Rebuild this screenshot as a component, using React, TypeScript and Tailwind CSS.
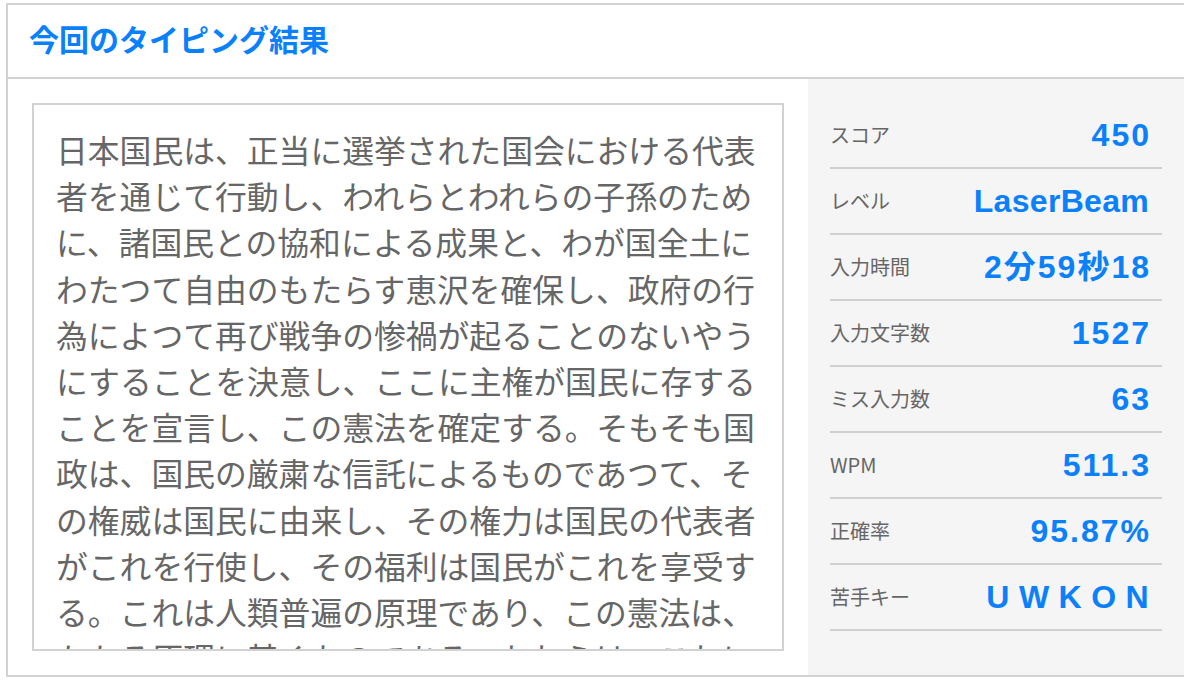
import React from "react";

const TEXT =
  "日本国民は、正当に選挙された国会における代表者を通じて行動し、われらとわれらの子孫のために、諸国民との協和による成果と、わが国全土にわたつて自由のもたらす恵沢を確保し、政府の行為によつて再び戦争の惨禍が起ることのないやうにすることを決意し、ここに主権が国民に存することを宣言し、この憲法を確定する。そもそも国政は、国民の厳粛な信託によるものであつて、その権威は国民に由来し、その権力は国民の代表者がこれを行使し、その福利は国民がこれを享受する。これは人類普遍の原理であり、この憲法は、かかる原理に基くものである。われらは、これに反する一切の憲法、法令及び詔勅を排除する。";

const rows: [string, string, boolean][] = [
  ["スコア", "450", true],
  ["レベル", "LaserBeam", false],
  ["入力時間", "2分59秒18", true],
  ["入力文字数", "1527", true],
  ["ミス入力数", "63", true],
  ["WPM", "511.3", true],
  ["正確率", "95.87%", true],
  ["苦手キー", "U W K O N", false],
];

const jp = { fontFamily: '"Noto Sans CJK JP", "Noto Sans", sans-serif' };
const val = { fontFamily: '"Liberation Sans", "Noto Sans CJK JP", sans-serif' };

export default function App() {
  return (
    <div className="w-[1184px] h-[688px] overflow-hidden bg-white" lang="ja">
      <div className="ml-[6px] mt-[3px] border-l-2 border-t-2 border-b-2 border-[#d2d2d2]">
        <div className="h-[74px] flex items-center pl-[21px] pb-[6px] border-b-2 border-[#d2d2d2]">
          <h2 className="text-[30px] font-bold text-[#0a80fb] leading-none" style={jp}>
            今回のタイピング結果
          </h2>
        </div>
        <div className="flex h-[596px]">
          <div className="w-[800px] pl-[24px] pt-[24px]">
            <div className="w-[752px] h-[548px] border-2 border-[#d2d2d2] bg-white overflow-hidden pl-[22px] pt-[21px]">
              <p
                className="w-[702px] text-[31.8px] leading-[46.2px] text-[#666666] break-all"
                style={jp}
              >
                {TEXT}
              </p>
            </div>
          </div>
          <div className="w-[376px] bg-[#f5f5f5] pl-[22px] pr-[22px] pt-[24px]">
            {rows.map(([k, v, num]) => (
              <div
                key={k}
                className="h-[66px] flex items-center justify-between border-b-2 border-[#d0d0d0] pr-[13px]"
              >
                <span className="text-[20px] text-[#666666]" style={jp}>
                  {k}
                </span>
                {num ? (
                  <span
                    className="text-[32px] font-bold text-[#0a80fb] leading-none whitespace-pre tracking-[2px] mr-[-2px]"
                    style={val}
                  >
                    {v}
                  </span>
                ) : (
                  <span
                    className="text-[32px] font-bold text-[#0a80fb] leading-none whitespace-pre tracking-[0.3px]"
                    style={val}
                  >
                    {v}
                  </span>
                )}
              </div>
            ))}
          </div>
        </div>
      </div>
    </div>
  );
}
